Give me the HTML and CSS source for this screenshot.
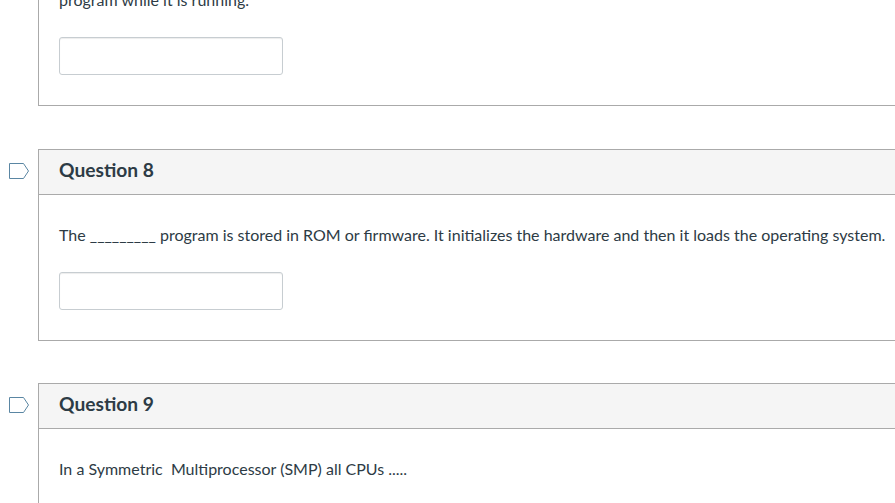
FILE: index.html
```html
<!DOCTYPE html>
<html lang="en">
<head>
    <meta charset="UTF-8">
    <title>Quiz</title>
    <link rel="stylesheet" href="styles.css">
</head>
<body>
    <div class="quiz">
        <div class="question question-cut">
            <div class="flag-col"></div>
            <div class="card">
                <div class="card-body">
                    <div class="question-text">program while it is running.</div>
                    <input class="answer" type="text">
                </div>
            </div>
        </div>

        <div class="question">
            <div class="flag-col">
                <svg class="flag" width="20" height="16" viewBox="0 0 20 16">
                    <path d="M0.5 0.5H14.5L19.5 8L14.5 15.5H0.5Z" fill="#fff" stroke="#5a86a3"/>
                </svg>
            </div>
            <div class="card">
                <div class="card-header">Question 8</div>
                <div class="card-body">
                    <div class="question-text">The _________ program is stored in ROM or firmware. It initializes the hardware and then it loads the operating system.</div>
                    <input class="answer" type="text">
                </div>
            </div>
        </div>

        <div class="question">
            <div class="flag-col">
                <svg class="flag" width="20" height="16" viewBox="0 0 20 16">
                    <path d="M0.5 0.5H14.5L19.5 8L14.5 15.5H0.5Z" fill="#fff" stroke="#5a86a3"/>
                </svg>
            </div>
            <div class="card">
                <div class="card-header">Question 9</div>
                <div class="card-body">
                    <div class="question-text">In a Symmetric&nbsp; Multiprocessor (SMP) all CPUs .....</div>
                </div>
            </div>
        </div>
    </div>
</body>
</html>
```

FILE: styles.css
```css
* {
    box-sizing: border-box;
    font-family: Lato, "Open Sans", sans-serif;
}

html, body {
    height: 503px;
    overflow: hidden;
}

body {
    margin: 0;
    background-color: white;
    color: #2d3b45;
}

.quiz {
    width: 920px;
}

.question {
    display: flex;
    margin-bottom: 42px;
}

/* first question is scrolled off the top */
.question-cut {
    margin-top: -40px;
    margin-bottom: 43px;
}

.question-cut .card {
    border-top: none;
}

.flag-col {
    flex: 0 0 38px;
    padding: 14px 0 0 9px;
}

.flag {
    display: block;
}

.card {
    flex: 1;
    border: 1px solid #aaaaaa;
}

.card-header {
    height: 45px;
    padding: 0 20px 6px;
    display: flex;
    align-items: center;
    background-color: #f5f5f5;
    border-bottom: 1px solid #aaaaaa;
    font-size: 19.2px;
    font-weight: 700;
}

.card-body {
    padding: 29px 20px 30px;
}

.question-text {
    font-size: 16px;
    line-height: 22px;
    margin-bottom: 26px;
}

.answer {
    display: block;
    width: 224px;
    height: 38px;
    border: 1px solid #c7cdd1;
    border-radius: 3px;
    background-color: white;
    box-shadow: inset 0 1px 1px rgba(0, 0, 0, 0.075);
}
```
